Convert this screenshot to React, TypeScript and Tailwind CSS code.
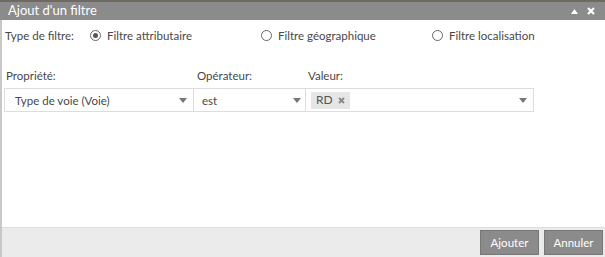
const font = { fontFamily: 'Lato, "Open Sans", sans-serif' };

function Radio({ checked, label }: { checked?: boolean; label: string }) {
  return (
    <label className="flex items-center gap-[6px]">
      <span className="flex h-[11px] w-[11px] items-center justify-center rounded-full border border-[#666]">
        {checked && <span className="h-[5px] w-[5px] rounded-full bg-[#555]" />}
      </span>
      <span>{label}</span>
    </label>
  );
}

function Caret() {
  return (
    <svg width="8" height="5" viewBox="0 0 8 5" className="shrink-0">
      <path d="M0 0h8L4 5z" fill="#777" />
    </svg>
  );
}

export default function App() {
  return (
    <div className="flex h-[257px] w-[605px] flex-col bg-[#6e6a62] text-[11.5px] text-[#484848]" style={font}>
      <div className="mt-[2px] flex h-[18px] items-center justify-between bg-[#8b8b8b] px-[8px] text-[13px] text-white">
        <span>Ajout d'un filtre</span>
        <div className="flex items-center gap-[9px] pr-[2px]">
          <svg width="7" height="5" viewBox="0 0 7 5">
            <path d="M0 5L3.5 0L7 5z" fill="#fff" />
          </svg>
          <svg width="8" height="8" viewBox="0 0 8 8">
            <path d="M1 1L7 7M7 1L1 7" stroke="#fff" strokeWidth="2.2" />
          </svg>
        </div>
      </div>

      <div className="flex flex-1 flex-col border-l-2 border-[#c8c8c8] bg-white">
        <div className="flex h-[30px] items-center pl-[3px] pt-[1px]">
          <span className="w-[85px]">Type de filtre:</span>
          <div className="w-[171px]">
            <Radio checked label="Filtre attributaire" />
          </div>
          <div className="w-[171px]">
            <Radio label="Filtre géographique" />
          </div>
          <Radio label="Filtre localisation" />
        </div>

        <div className="mt-[17px] flex pl-[2px]">
          <div className="w-[190px]">
            <div className="mb-[4px] pl-[2px]">Propriété:</div>
            <div className="flex h-[24px] items-center justify-between border border-[#ddd] pl-[10px] pr-[6px]">
              <span>Type de voie (Voie)</span>
              <Caret />
            </div>
          </div>
          <div className="w-[112px]">
            <div className="mb-[4px] pl-[3px]">Opérateur:</div>
            <div className="flex h-[24px] items-center justify-between border border-l-0 border-[#ddd] pl-[8px] pr-[4px]">
              <span>est</span>
              <Caret />
            </div>
          </div>
          <div className="w-[228px]">
            <div className="mb-[4px] pl-[2px]">Valeur:</div>
            <div className="flex h-[24px] items-center justify-between border border-l-0 border-[#ddd] pl-[5px] pr-[6px]">
              <span className="flex h-[17px] items-center gap-[5px] bg-[#e6e6e6] px-[5px] text-[12px] text-[#555]">
                RD
                <svg width="7" height="7" viewBox="0 0 7 7">
                  <path d="M1 1L6 6M6 1L1 6" stroke="#888" strokeWidth="1.8" />
                </svg>
              </span>
              <Caret />
            </div>
          </div>
        </div>

        <div className="flex-1" />

        <div className="flex h-[30px] items-center justify-end gap-[5px] border-t border-[#ddd] bg-[#ebebeb] pr-[2px]">
          <button className="h-[25px] w-[59px] border border-[#777] bg-[#8b8b8b] text-[11.5px] text-white">
            Ajouter
          </button>
          <button className="h-[25px] w-[59px] border border-[#777] bg-[#8b8b8b] text-[11.5px] text-white">
            Annuler
          </button>
        </div>
      </div>
    </div>
  );
}
